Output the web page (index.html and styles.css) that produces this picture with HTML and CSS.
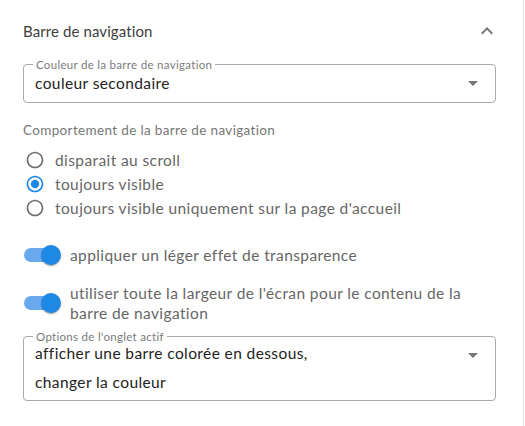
FILE: index.html
```html
<!DOCTYPE html>
<html lang="fr">
<head>
<meta charset="utf-8">
<title>Barre de navigation</title>
<link rel="stylesheet" href="styles.css">
</head>
<body>
<div class="panel">
  <div class="acc-header">
    <span class="acc-title">Barre de navigation</span>
    <svg class="icon" viewBox="0 0 24 24" width="24" height="24"><path d="M12 8l-6 6 1.41 1.41L12 10.83l4.59 4.58L18 14z"/></svg>
  </div>
  <div class="acc-body">
    <fieldset class="field">
      <legend class="field-label">Couleur de la barre de navigation</legend>
      <div class="field-row">
        <div class="field-values"><div class="value">couleur secondaire</div></div>
        <svg class="icon arrow" viewBox="0 0 24 24" width="24" height="24"><path d="M7 10l5 5 5-5z"/></svg>
      </div>
    </fieldset>

    <div class="group-label">Comportement de la barre de navigation</div>
    <div class="radios">
      <label class="radio-row">
        <svg class="radio" viewBox="0 0 24 24" width="20" height="20"><path d="M12 2C6.48 2 2 6.48 2 12s4.48 10 10 10 10-4.48 10-10S17.52 2 12 2zm0 18c-4.42 0-8-3.58-8-8s3.58-8 8-8 8 3.58 8 8-3.58 8-8 8z"/></svg>
        <span class="radio-text">disparait au scroll</span>
      </label>
      <label class="radio-row checked">
        <svg class="radio" viewBox="0 0 24 24" width="20" height="20"><path d="M12 2C6.48 2 2 6.48 2 12s4.48 10 10 10 10-4.48 10-10S17.52 2 12 2zm0 18c-4.42 0-8-3.58-8-8s3.58-8 8-8 8 3.58 8 8-3.58 8-8 8z"/><circle cx="12" cy="12" r="5"/></svg>
        <span class="radio-text">toujours visible</span>
      </label>
      <label class="radio-row">
        <svg class="radio" viewBox="0 0 24 24" width="20" height="20"><path d="M12 2C6.48 2 2 6.48 2 12s4.48 10 10 10 10-4.48 10-10S17.52 2 12 2zm0 18c-4.42 0-8-3.58-8-8s3.58-8 8-8 8 3.58 8 8-3.58 8-8 8z"/></svg>
        <span class="radio-text">toujours visible uniquement sur la page d'accueil</span>
      </label>
    </div>

    <label class="switch-row first">
      <span class="switch"><span class="track"></span><span class="thumb"></span></span>
      <span class="switch-text">appliquer un léger effet de transparence</span>
    </label>
    <label class="switch-row second">
      <span class="switch"><span class="track"></span><span class="thumb"></span></span>
      <span class="switch-text">utiliser toute la largeur de l'écran pour le contenu de la barre de navigation</span>
    </label>

    <fieldset class="field multi">
      <legend class="field-label">Options de l'onglet actif</legend>
      <div class="field-row">
        <div class="field-values">
          <div class="value">afficher une barre colorée en dessous,</div>
          <div class="value">changer la couleur</div>
        </div>
        <svg class="icon arrow" viewBox="0 0 24 24" width="24" height="24"><path d="M7 10l5 5 5-5z"/></svg>
      </div>
    </fieldset>
  </div>
</div>
</body>
</html>
```
FILE: styles.css
```css
* { box-sizing: border-box; }
html, body { margin: 0; padding: 0; background: #fff; }
body { font-family: "Lato", "Open Sans", sans-serif; color: #333; }

.panel {
  width: 524px;
  height: 426px;
  border-right: 1px solid #e4e4e4;
  background: #fff;
}

.acc-header {
  height: 58px;
  padding: 4px 24px 0 23px;
  display: flex;
  align-items: center;
  justify-content: space-between;
}
.acc-title { font-size: 15px; letter-spacing: 0.1px; line-height: 20px; color: #3d3d3d; }
.icon { fill: rgba(0,0,0,0.54); display: block; }

.acc-body { padding: 0 27px 0 23px; }

.field {
  margin: 0;
  padding: 0 10px 7px 11px;
  border: 1px solid #a9a9a9;
  border-radius: 4px;
  min-width: 0;
}
.field-label {
  margin-left: -2px;
  padding: 0 3px;
  font-size: 11.5px;
  letter-spacing: 0.3px;
  line-height: 13px;
  color: #7a7a7a;
}
.field-row { display: flex; align-items: center; }
.field-values { flex: 1; }
.value { font-size: 15.5px; letter-spacing: 0.4px; line-height: 20px; color: #222; }
.arrow { flex: none; }

.multi { margin-top: 7px; padding-bottom: 8px; }
.multi .field-row { align-items: flex-start; }
.multi .field-values { display: flex; flex-direction: column; gap: 9px; }

.group-label {
  margin-top: 18px;
  font-size: 13.5px;
  letter-spacing: 0.35px;
  line-height: 18px;
  color: #777;
}

.radios { margin-top: 9px; display: flex; flex-direction: column; }
.radio-row {
  height: 24px;
  display: flex;
  align-items: center;
  gap: 10px;
  padding-left: 2px;
}
.radio { fill: #6f6f6f; flex: none; }
.radio-row.checked .radio { fill: #1e88e5; }
.radio-text { font-size: 15.5px; letter-spacing: 0.4px; line-height: 20px; color: #666; }

.switch-row {
  display: flex;
  align-items: center;
  margin-left: -11px;
}
.switch-row.first { margin-top: 16px; }
.switch-row.second { margin-top: 9px; }
.switch {
  width: 58px;
  height: 38px;
  flex: none;
  display: flex;
  align-items: center;
  padding: 0 12px;
  position: relative;
}
.track {
  width: 34px;
  height: 14px;
  border-radius: 7px;
  background: #68a9ee;
}
.thumb {
  position: absolute;
  left: 29px;
  top: 9px;
  width: 20px;
  height: 20px;
  border-radius: 50%;
  background: #1e88e5;
  box-shadow: 0 2px 1px -1px rgba(0,0,0,0.2), 0 1px 1px 0 rgba(0,0,0,0.14), 0 1px 3px 0 rgba(0,0,0,0.12);
}
.switch-text { font-size: 15.5px; letter-spacing: 0.4px; line-height: 20px; color: #666; }
```
